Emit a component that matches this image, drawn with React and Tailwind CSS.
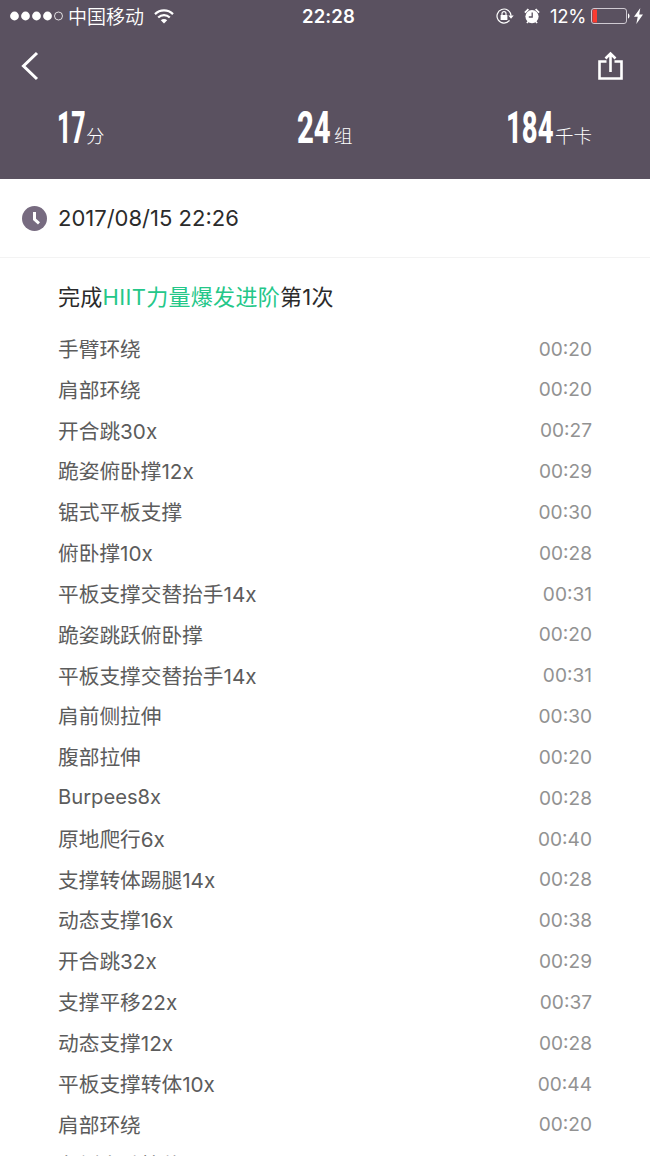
const rows = [
  ['手臂环绕', '00:20'],
  ['肩部环绕', '00:20'],
  ['开合跳30x', '00:27'],
  ['跪姿俯卧撑12x', '00:29'],
  ['锯式平板支撑', '00:30'],
  ['俯卧撑10x', '00:28'],
  ['平板支撑交替抬手14x', '00:31'],
  ['跪姿跳跃俯卧撑', '00:20'],
  ['平板支撑交替抬手14x', '00:31'],
  ['肩前侧拉伸', '00:30'],
  ['腹部拉伸', '00:20'],
  ['Burpees8x', '00:28'],
  ['原地爬行6x', '00:40'],
  ['支撑转体踢腿14x', '00:28'],
  ['动态支撑16x', '00:38'],
  ['开合跳32x', '00:29'],
  ['支撑平移22x', '00:37'],
  ['动态支撑12x', '00:28'],
  ['平板支撑转体10x', '00:44'],
  ['肩部环绕', '00:20'],
  ['左侧大臂拉伸', ''],
];

function StatusBar() {
  return (
    <div className="flex h-8 items-center pl-[10px] pr-[7px]">
      <div className="flex w-[292px] items-center">
        <svg width="54" height="10" viewBox="0 0 54 10" fill="#fff">
          <circle cx="4.5" cy="5" r="4.4" />
          <circle cx="15.5" cy="5" r="4.4" />
          <circle cx="26.5" cy="5" r="4.4" />
          <circle cx="37.5" cy="5" r="4.4" />
          <circle cx="48.5" cy="5" r="4" fill="none" stroke="#fff" strokeWidth="0.8" />
        </svg>
        <span className="ml-[4px] pt-[3px] text-[19px] font-[350] leading-[29px]">中国移动</span>
        <svg className="ml-[10px]" width="20" height="15" viewBox="0 0 20 15" fill="none" stroke="#fff" strokeWidth="2.2">
          <path d="M1 5.1a12.9 12.9 0 0 1 18 0" />
          <path d="M4.2 8.5a8.3 8.3 0 0 1 11.6 0" />
          <path d="M10 14.4 6.8 11.2a4.6 4.6 0 0 1 6.4 0z" fill="#fff" stroke="none" />
        </svg>
      </div>
      <div className="text-[18.5px] font-semibold leading-8 tracking-[0.1px]">22:28</div>
      <div className="flex flex-1 items-center justify-end">
        <svg width="18" height="16" viewBox="0 0 18 16" fill="none" stroke="#fff" strokeWidth="1.2">
          <path d="M13.5 12.4A7 7 0 1 1 15 7.6" />
          <path d="M12.3 7.5h5.4L15 10.8z" fill="#fff" stroke="none" />
          <rect x="4.6" y="7" width="6.8" height="5" fill="#fff" stroke="none" />
          <path d="M6 7V5.6a2 2 0 0 1 4 0V7" />
        </svg>
        <svg className="ml-[10px]" width="16" height="16" viewBox="0 0 16 16">
          <circle cx="8" cy="8.6" r="6.6" fill="#fff" />
          <path d="M0.9 4.6 4.4 1.1M11.6 1.1 15.1 4.6" stroke="#fff" strokeWidth="1.8" />
          <path d="M2.8 15l1.6-1.6M13.2 15l-1.6-1.6" stroke="#fff" strokeWidth="1.4" />
          <path d="M8.2 4.5v4.5H4.8" fill="none" stroke="#5a5160" strokeWidth="1.3" />
        </svg>
        <span className="ml-[10px] text-[18.5px] leading-8 tracking-[-0.3px]">12%</span>
        <svg className="ml-[5px]" width="39" height="16" viewBox="0 0 39 16">
          <rect x="0.5" y="0.5" width="35" height="15" rx="2.5" fill="none" stroke="#cfcad2" />
          <path d="M2.5 1.5H6v13H2.5a1 1 0 0 1-1-1v-11a1 1 0 0 1 1-1z" fill="#fb3b30" />
          <path d="M37 5.5c2 .5 2 4.5 0 5z" fill="#fff" />
        </svg>
        <svg className="ml-[4px]" width="9" height="16" viewBox="0 0 9 16" fill="#fff">
          <path d="M6.3 0 0 8.7h3.7L2.3 16 9 6.6H5.2z" />
        </svg>
      </div>
    </div>
  );
}

function Stat({ value, unit, box, scale }) {
  return (
    <div className="flex items-baseline">
      <div className={box}>
        <span className={`inline-block w-0 origin-left whitespace-nowrap font-[Roboto] text-[45px] font-extrabold leading-[48px] ${scale}`}>
          {value}
        </span>
      </div>
      <span className="text-[18.5px] font-light">{unit}</span>
    </div>
  );
}

export default function App() {
  return (
    <div className="h-[1156px] w-[650px] overflow-hidden bg-white font-['Inter','Noto_Sans_CJK_SC',sans-serif]">
      <header className="h-[179px] bg-[#5a5160] text-white">
        <StatusBar />
        <div className="flex h-[68px] items-center justify-between pl-[21px] pr-[26px]">
          <svg width="18" height="30" viewBox="0 0 18 30" fill="none" stroke="#fff" strokeWidth="3">
            <path d="M16 2 2.5 15 16 28" />
          </svg>
          <svg width="27" height="30" viewBox="0 0 27 30" fill="none" stroke="#fff" strokeWidth="2.6">
            <path d="M9.5 10.5H2.5v17h22v-17h-7" />
            <path d="M13.5 21V3M8.5 7.5l5-5 5 5" />
          </svg>
        </div>
        <div className="grid grid-cols-[240px_209px_auto] pl-[57px] pt-[4px]">
          <Stat value="17" unit="分" box="w-[29px]" scale="scale-x-[0.55]" />
          <Stat value="24" unit="组" box="w-[37px]" scale="scale-x-[0.65]" />
          <Stat value="184" unit="千卡" box="w-[49px]" scale="scale-x-[0.61]" />
        </div>
      </header>
      <section className="flex h-[79px] items-center border-b border-[#f3f3f3] pl-[22px]">
        <svg width="25" height="25" viewBox="0 0 25 25">
          <circle cx="12.5" cy="12.5" r="12.5" fill="#776b80" />
          <path d="M12.5 6v7.3l4.5 4" fill="none" stroke="#fff" strokeWidth="3" />
        </svg>
        <span className="ml-[11px] text-[22px] font-[380] leading-8 text-[#2b2b2b]">2017/08/15 22:26</span>
      </section>
      <main className="pl-[58px] pr-[58px]">
        <h1 className="mt-[20px] h-[51px] whitespace-nowrap text-[22px] font-[370] leading-[38px] tracking-[0.3px] text-[#2b2b2b]">
          完成<span className="text-[#24c789]">HIIT力量爆发进阶</span>第1次
        </h1>
        <ul>
          {rows.map(([name, time], i) => (
            <li key={i} className="flex h-[40.84px] items-center justify-between whitespace-nowrap">
              <span
                className={
                  name === 'Burpees8x'
                    ? 'pb-[2px] text-[20.2px] font-[385] text-[#5c5c5c]'
                    : 'text-[20.7px] font-[375] text-[#5c5c5c]'
                }
              >
                {name}
              </span>
              <span className="pb-[1px] text-[19.1px] font-[385] text-[#929292]">{time}</span>
            </li>
          ))}
        </ul>
      </main>
    </div>
  );
}
